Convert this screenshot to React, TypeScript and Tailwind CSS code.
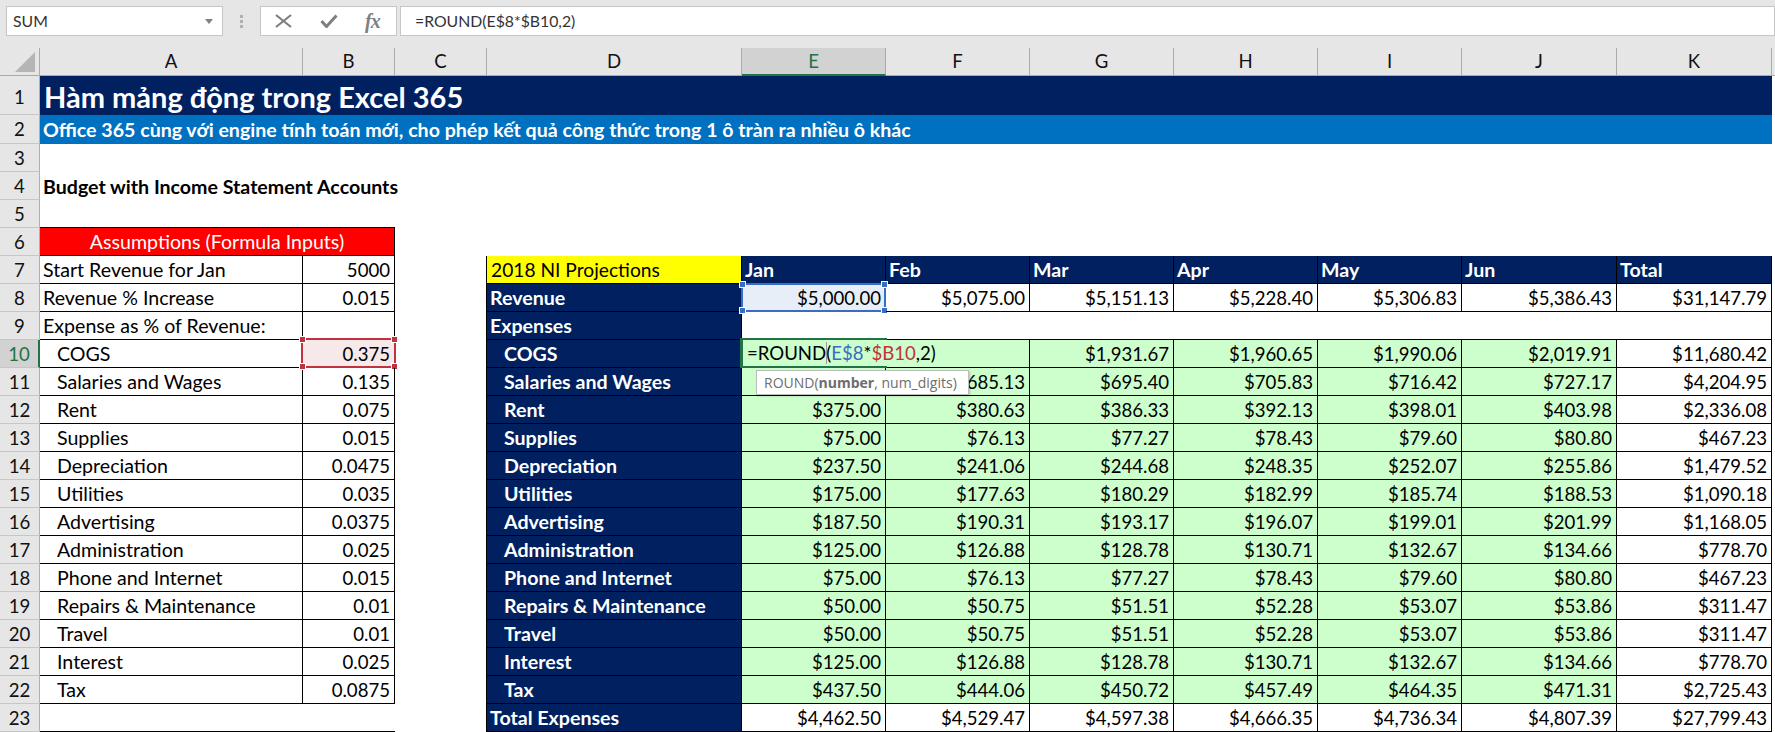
import React from "react";

const COLS = "grid grid-cols-[40px_263px_92px_92px_255px_144px_144px_144px_144px_144px_155px_155px_3px]";
const NAVY = "bg-[#002060] text-white font-bold";
const BOX = "border-r border-b border-black";

const leftRows: [string, string][] = [
  ["Start Revenue for Jan", "5000"],
  ["Revenue % Increase", "0.015"],
  ["Expense as % of Revenue:", ""],
  ["COGS", "0.375"],
  ["Salaries and Wages", "0.135"],
  ["Rent", "0.075"],
  ["Supplies", "0.015"],
  ["Depreciation", "0.0475"],
  ["Utilities", "0.035"],
  ["Advertising", "0.0375"],
  ["Administration", "0.025"],
  ["Phone and Internet", "0.015"],
  ["Repairs & Maintenance", "0.01"],
  ["Travel", "0.01"],
  ["Interest", "0.025"],
  ["Tax", "0.0875"],
];

const rightRows: string[][] = [
  ["2018 NI Projections", "Jan", "Feb", "Mar", "Apr", "May", "Jun", "Total"],
  ["Revenue", "$5,000.00", "$5,075.00", "$5,151.13", "$5,228.40", "$5,306.83", "$5,386.43", "$31,147.79"],
  ["Expenses"],
  ["COGS", "", "", "$1,931.67", "$1,960.65", "$1,990.06", "$2,019.91", "$11,680.42"],
  ["Salaries and Wages", "$675.00", "$685.13", "$695.40", "$705.83", "$716.42", "$727.17", "$4,204.95"],
  ["Rent", "$375.00", "$380.63", "$386.33", "$392.13", "$398.01", "$403.98", "$2,336.08"],
  ["Supplies", "$75.00", "$76.13", "$77.27", "$78.43", "$79.60", "$80.80", "$467.23"],
  ["Depreciation", "$237.50", "$241.06", "$244.68", "$248.35", "$252.07", "$255.86", "$1,479.52"],
  ["Utilities", "$175.00", "$177.63", "$180.29", "$182.99", "$185.74", "$188.53", "$1,090.18"],
  ["Advertising", "$187.50", "$190.31", "$193.17", "$196.07", "$199.01", "$201.99", "$1,168.05"],
  ["Administration", "$125.00", "$126.88", "$128.78", "$130.71", "$132.67", "$134.66", "$778.70"],
  ["Phone and Internet", "$75.00", "$76.13", "$77.27", "$78.43", "$79.60", "$80.80", "$467.23"],
  ["Repairs & Maintenance", "$50.00", "$50.75", "$51.51", "$52.28", "$53.07", "$53.86", "$311.47"],
  ["Travel", "$50.00", "$50.75", "$51.51", "$52.28", "$53.07", "$53.86", "$311.47"],
  ["Interest", "$125.00", "$126.88", "$128.78", "$130.71", "$132.67", "$134.66", "$778.70"],
  ["Tax", "$437.50", "$444.06", "$450.72", "$457.49", "$464.35", "$471.31", "$2,725.43"],
  ["Total Expenses", "$4,462.50", "$4,529.47", "$4,597.38", "$4,666.35", "$4,736.34", "$4,807.39", "$27,799.43"],
];

function RowHead({ n, active, tall }: { n: number; active?: boolean; tall?: boolean }) {
  return (
    <div
      className={
        "flex items-center justify-center border-b border-[#c6c6c6] text-[18.6px] " +
        (tall ? "pt-[4px] " : "pt-[1px] ") +
        (active
          ? "bg-[#d2d2d2] text-[#217346] border-r-2 border-r-[#217346]"
          : "bg-[#e6e6e6] text-[#111111] border-r border-r-[#b0b0b0]")
      }
    >
      {n}
    </div>
  );
}

function Handles({ color }: { color: string }) {
  const base = "absolute w-[7px] h-[7px] border border-white " + color;
  return (
    <>
      <span className={base + " -left-[4px] -top-[4px]"} />
      <span className={base + " -right-[4px] -top-[4px]"} />
      <span className={base + " -left-[4px] -bottom-[4px]"} />
      <span className={base + " -right-[4px] -bottom-[4px]"} />
    </>
  );
}

function Cell({ className, children }: { className?: string; children?: React.ReactNode }) {
  return <div className={"flex items-center pt-[1px] whitespace-nowrap min-w-0 " + (className ?? "")}>{children}</div>;
}

function LeftPair({ label, value, index }: { label: string; value: string; index: number }) {
  const indented = index >= 3;
  const isActive = index === 3;
  return (
    <>
      <Cell className={BOX + (indented ? " pl-[17px]" : " pl-[3px]")}>{label}</Cell>
      <Cell className={"justify-end pr-[4px] relative text-[18.6px] " + BOX + (isActive ? " bg-[#f7e9ea]" : "")}>
        {value}
        {isActive && (
          <span className="absolute -left-[2px] -top-[2px] -right-[2px] -bottom-[1px] border-2 border-[#c0323f]">
            <Handles color="bg-[#c0323f]" />
          </span>
        )}
      </Cell>
    </>
  );
}

function RightCells({ data, index }: { data: string[]; index: number }) {
  const indentLabel = index >= 3 && index <= 15;
  const labelCls =
    index === 0
      ? "bg-[#ffff00] text-black pl-[4px] text-[19.2px]"
      : NAVY + (indentLabel ? " pl-[17px]" : " pl-[3px]");
  const label = <Cell className={BOX + " " + labelCls}>{data[0]}</Cell>;

  if (index === 2) {
    return (
      <>
        {label}
        <Cell className={"col-span-7 " + BOX} />
      </>
    );
  }
  if (index === 0) {
    return (
      <>
        {label}
        {data.slice(1).map((t) => (
          <Cell key={t} className={BOX + " " + NAVY + " pl-[3px]"}>
            {t}
          </Cell>
        ))}
      </>
    );
  }
  return (
    <>
      {label}
      {data.slice(1).map((t, i) => {
        const green = index >= 3 && index <= 15 && i < 6;
        const selected = index === 1 && i === 0;
        const editing = index === 3 && i === 0;
        return (
          <Cell
            key={i}
            className={
              "justify-end pr-[4px] relative text-[18.6px] border-b border-black " +
              (editing ? "" : "border-r ") +
              (green ? "bg-[#ccffcc] " : "") +
              (selected ? "bg-[#e8eef8]" : "")
            }
          >
            {t}
            {selected && (
              <span className="absolute -left-[1px] -top-[1px] right-[-1px] bottom-[-1px] border-2 border-[#3a6cc4]">
                <Handles color="bg-[#3a6cc4]" />
              </span>
            )}
            {editing && (
              <span className="absolute z-10 left-[-2px] top-[-2px] right-[-1px] bottom-[-1px] border-l-[3px] border-t-2 border-b-2 border-[#217346] flex items-center pl-[4px] pt-[1px] text-black">
                =ROUND(<span className="text-[#3a6cc4]">E$8</span>*<span className="text-[#c0323f]">$B10</span>,2)
                <span className="absolute left-[83px] top-[2px] bottom-[2px] w-[1px] bg-[#9a9a9a]" />
              </span>
            )}
          </Cell>
        );
      })}
    </>
  );
}

function FormulaBar() {
  return (
    <div className="h-[48px] bg-[#e6e6e6] flex items-start pt-[6px] text-[15.8px] text-[#333333]">
      <div className="ml-[6px] w-[217px] h-[30px] bg-white border border-[#c6c6c6] flex items-center justify-between pl-[6px] pr-[9px]">
        <span>SUM</span>
        <svg width="8" height="5" viewBox="0 0 8 5">
          <path d="M0 0H8L4 5Z" fill="#808080" />
        </svg>
      </div>
      <div className="ml-[17px] w-[3px] h-[30px] flex flex-col justify-center gap-[2px]">
        <span className="h-[3px] bg-[#b0b0b0]" />
        <span className="h-[3px] bg-[#b0b0b0]" />
        <span className="h-[3px] bg-[#b0b0b0]" />
      </div>
      <div className="ml-[17px] w-[137px] h-[30px] bg-white border border-[#c6c6c6] relative flex items-center">
        <svg className="ml-[14px]" width="17" height="14" viewBox="0 0 17 14">
          <path d="M1 1L16 13M16 1L1 13" stroke="#7f7f7f" strokeWidth="2.2" fill="none" />
        </svg>
        <svg className="ml-[28px]" width="18" height="14" viewBox="0 0 18 14">
          <path d="M1.5 7L6.5 12.5L16.5 1.5" stroke="#7f7f7f" strokeWidth="3" fill="none" />
        </svg>
        <span className="ml-[27px] font-['Liberation_Serif',serif] italic font-bold text-[20px] text-[#7f7f7f] tracking-[-1px]">fx</span>
      </div>
      <div className="ml-[3px] flex-1 h-[30px] bg-white border border-[#c6c6c6] flex items-center pl-[14px]">
        =ROUND(E$8*$B10,2)
      </div>
    </div>
  );
}

function ColumnHeader() {
  const letters = ["A", "B", "C", "D", "E", "F", "G", "H", "I", "J", "K"];
  return (
    <div className={COLS + " h-[28px] bg-[#e6e6e6] text-[18.6px]"}>
      <div className="border-r border-b border-[#ababab] flex items-end justify-end pr-[4px] pb-[3px]">
        <svg width="20" height="20" viewBox="0 0 20 20">
          <path d="M20 0V20H0Z" fill="#b5b5b5" />
        </svg>
      </div>
      {letters.map((l) => (
        <div
          key={l}
          className={
            "flex items-center justify-center border-r " +
            (l === "E"
              ? "bg-[#d2d2d2] text-[#217346] border-r-[#ababab] border-b-2 border-b-[#217346]"
              : "border-[#ababab] border-b text-[#111111]")
          }
        >
          {l}
        </div>
      ))}
      <div className="border-b border-[#ababab]" />
    </div>
  );
}

export default function App() {
  const rows: number[] = [];
  for (let n = 7; n <= 23; n++) rows.push(n);
  return (
    <div className="w-[1775px] h-[732px] overflow-hidden bg-white text-black font-['Lato','Carlito',sans-serif] text-[19.6px] leading-none relative">
      <FormulaBar />
      <ColumnHeader />

      <div className={COLS + " h-[39px]"}>
        <RowHead n={1} tall />
        <Cell className="col-span-11 bg-[#002060] text-white font-bold text-[29px] pl-[4px]">
          Hàm mảng động trong Excel 365
        </Cell>
      </div>
      <div className={COLS + " h-[29px]"}>
        <RowHead n={2} />
        <Cell className="col-span-11 bg-[#0070c0] text-white font-bold pl-[3px]">
          Office 365 cùng với engine tính toán mới, cho phép kết quả công thức trong 1 ô tràn ra nhiều ô khác
        </Cell>
      </div>
      <div className={COLS + " h-[28px]"}>
        <RowHead n={3} />
      </div>
      <div className={COLS + " h-[28px]"}>
        <RowHead n={4} />
        <Cell className="col-span-3 font-bold pl-[3px]">Budget with Income Statement Accounts</Cell>
      </div>
      <div className={COLS + " h-[28px]"}>
        <RowHead n={5} />
        <Cell className="col-span-2 border-b border-black" />
      </div>
      <div className={COLS + " h-[28px]"}>
        <RowHead n={6} />
        <Cell className={"col-span-2 justify-center bg-[#ff0000] text-white " + BOX}>Assumptions (Formula Inputs)</Cell>
      </div>

      {rows.map((n, i) => (
        <div key={n} className={COLS + " h-[28px]"}>
          <RowHead n={n} active={n === 10} />
          {n <= 22 ? (
            <LeftPair label={leftRows[i][0]} value={leftRows[i][1]} index={i} />
          ) : (
            <Cell className="col-span-2 border-b border-black" />
          )}
          <div className="border-r border-black" />
          <RightCells data={rightRows[i]} index={i} />
        </div>
      ))}

      <div className="absolute z-20 left-[756px] top-[370px] w-[213px] h-[25px] bg-white border border-[#bebebe] shadow-[1px_1px_2px_rgba(0,0,0,0.2)] flex items-center pl-[7px] whitespace-nowrap font-['Open_Sans',sans-serif] text-[14px] text-[#6d6d6d]">
        ROUND(<b>number</b>, num_digits)
      </div>
    </div>
  );
}
